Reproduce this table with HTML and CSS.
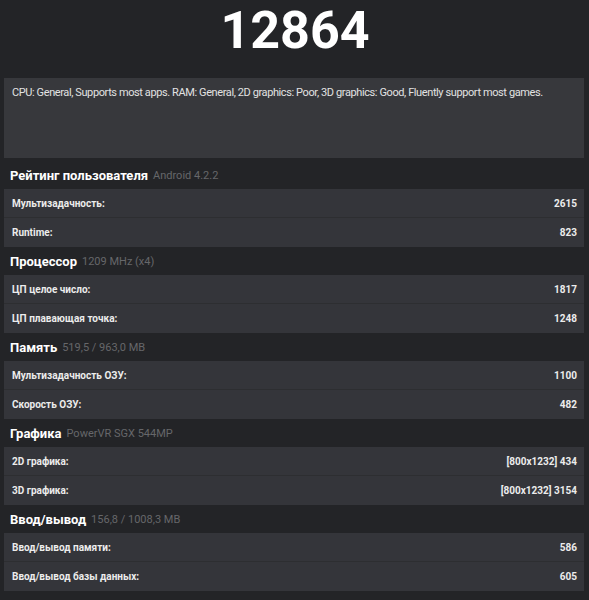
FILE: index.html
```html
<!DOCTYPE html>
<html lang="ru">
<head>
    <meta charset="UTF-8">
    <meta name="viewport" content="width=device-width, initial-scale=1.0">
    <title>Benchmark</title>
    <link rel="stylesheet" href="styles.css">
</head>
<body>

    <!-- Total score -->
    <div class="score">12864</div>

    <div class="summary">
        CPU: General, Supports most apps. RAM: General, 2D graphics: Poor, 3D graphics: Good, Fluently support most games.
    </div>

    <div class="section">
        <div class="section-title">Рейтинг пользователя <span class="section-sub">Android 4.2.2</span></div>
        <div class="rows">
            <div class="row"><span class="label">Мультизадачность:</span><span class="value">2615</span></div>
            <div class="row"><span class="label">Runtime:</span><span class="value">823</span></div>
        </div>
    </div>

    <div class="section">
        <div class="section-title">Процессор <span class="section-sub">1209 MHz (x4)</span></div>
        <div class="rows">
            <div class="row"><span class="label">ЦП целое число:</span><span class="value">1817</span></div>
            <div class="row"><span class="label">ЦП плавающая точка:</span><span class="value">1248</span></div>
        </div>
    </div>

    <div class="section">
        <div class="section-title">Память <span class="section-sub">519,5 / 963,0 MB</span></div>
        <div class="rows">
            <div class="row"><span class="label">Мультизадачность ОЗУ:</span><span class="value">1100</span></div>
            <div class="row"><span class="label">Скорость ОЗУ:</span><span class="value">482</span></div>
        </div>
    </div>

    <div class="section">
        <div class="section-title">Графика <span class="section-sub">PowerVR SGX 544MP</span></div>
        <div class="rows">
            <div class="row"><span class="label">2D графика:</span><span class="value">[800x1232] 434</span></div>
            <div class="row"><span class="label">3D графика:</span><span class="value">[800x1232] 3154</span></div>
        </div>
    </div>

    <div class="section">
        <div class="section-title">Ввод/вывод <span class="section-sub">156,8 / 1008,3 MB</span></div>
        <div class="rows">
            <div class="row"><span class="label">Ввод/вывод памяти:</span><span class="value">586</span></div>
            <div class="row"><span class="label">Ввод/вывод базы данных:</span><span class="value">605</span></div>
        </div>
    </div>

</body>
</html>
```

FILE: styles.css
```css
body {
    margin: 0;
    padding: 0 5px 8px 4px;
    font-family: Roboto, "Liberation Sans", sans-serif;
    background-color: #232427;
    color: #e6e6e6;
}

/* Big score on top */
.score {
    height: 78px;
    font-size: 52px;
    line-height: 61px;
    font-weight: 700;
    color: #ffffff;
    text-align: center;
    padding-left: 2px;
}

.summary {
    height: 80px;
    box-sizing: border-box;
    padding: 8px 8px;
    background-color: #37383c;
    font-size: 11px;
    line-height: 14px;
    letter-spacing: -0.4px;
    white-space: nowrap;
    color: #e2e2e2;
    margin-bottom: 3px;
}

/* Sections */
.section-title {
    height: 28px;
    display: flex;
    align-items: center;
    padding-left: 6px;
    font-size: 13px;
    font-weight: 700;
    color: #ffffff;
}

.section-sub {
    margin-left: 5px;
    font-size: 11px;
    font-weight: 400;
    color: #66676a;
}

.rows {
    background-color: #34353a;
}

.row {
    height: 28px;
    display: flex;
    justify-content: space-between;
    align-items: center;
    padding: 0 7px 0 8px;
    font-size: 10px;
    font-weight: 700;
    color: #ececec;
    border-bottom: 1px solid #2d2e31;
}

.row:last-child {
    height: 29px;
    border-bottom: none;
}
```
